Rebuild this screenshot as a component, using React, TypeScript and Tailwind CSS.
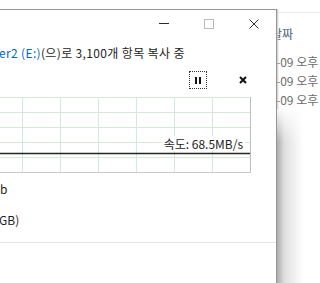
import { type ReactNode } from 'react'

const gridCols = [22, 60, 98, 136, 174, 212]
const gridRows = [0, 15, 30, 45, 60]

// Speed graph - the grid and the transfer line
function SpeedChart() {
  return (
    <svg width="251" height="76" className="block">
      {gridRows.map((y) => (
        <line key={y} x1="0" x2="250" y1={y + 0.5} y2={y + 0.5} stroke="#d6e8d8" />
      ))}
      {gridCols.map((x) => (
        <line key={x} x1={x + 0.5} x2={x + 0.5} y1="0" y2="75" stroke="#d6e8d8" />
      ))}
      <line x1="0" x2="250" y1="56.5" y2="56.5" stroke="#262626" strokeWidth="1.4" />
      <line x1="250.5" x2="250.5" y1="0" y2="76" stroke="#bdbdbd" />
      <line x1="0" x2="251" y1="75.5" y2="75.5" stroke="#c9c9c9" />
    </svg>
  )
}

function CaptionButton({ children }: { children: ReactNode }) {
  return <div className="w-[45px] h-full flex justify-center pt-[9px]">{children}</div>
}

function ExplorerRow({ text }: { text: string }) {
  return <div className="h-[19px] leading-[19px] whitespace-nowrap text-[#6d6d6d] -ml-[1px]">{text}</div>
}

export default function App() {
  return (
    <div className="w-[320px] h-[283px] bg-white overflow-hidden flex font-['Noto_Sans_CJK_KR','Noto_Sans',sans-serif] text-[12px]">
      {/* Copy dialog */}
      <div className="w-[277px] shrink-0 flex flex-col relative z-10">
        <div className="h-[9px] shrink-0" />
        <div className="flex-1 border-t border-r border-[#959595] bg-white flex flex-col">
          {/* Title bar */}
          <div className="h-[30px] shrink-0 flex justify-end">
            <CaptionButton>
              <div className="w-[10px] h-px bg-[#2b2b2b] mt-[4px]" />
            </CaptionButton>
            <CaptionButton>
              <div className="w-[10px] h-[10px] border border-[#b9b9b9]" />
            </CaptionButton>
            <CaptionButton>
              <svg width="10" height="10" viewBox="0 0 10 10">
                <path d="M0.5 0.5 L9.5 9.5 M9.5 0.5 L0.5 9.5" stroke="#2b2b2b" strokeWidth="1" fill="none" />
              </svg>
            </CaptionButton>
          </div>

          {/* Header line */}
          <div className="mt-[5px] h-[16px] leading-[16px] whitespace-nowrap text-[#1e1e1e] -ml-[1px] tracking-[0.35px]">
            <span className="text-[#0066cc]">er2 (E:)</span>(으)로 3,100개 항목 복사 중
          </div>

          {/* Pause / cancel */}
          <div className="mt-[10px] h-[18px] flex items-center">
            <div className="ml-[189px] w-[18px] h-[18px] border border-dotted border-[#333] flex items-center justify-center gap-[2px]">
              <div className="w-[2px] h-[7px] bg-[#111]" />
              <div className="w-[2px] h-[7px] bg-[#111]" />
            </div>
            <div className="ml-[32px] w-[8px] h-[8px] flex items-center justify-center">
              <svg width="8" height="8" viewBox="0 0 8 8">
                <path d="M1 1 L7 7 M7 1 L1 7" stroke="#111" strokeWidth="2" fill="none" />
              </svg>
            </div>
          </div>

          {/* Speed graph */}
          <div className="mt-[8px] relative w-[251px] h-[76px]">
            <SpeedChart />
            <div className="absolute right-[6px] top-[39px] h-[15px] leading-[15px] px-[2px] bg-white text-[#1e1e1e] whitespace-nowrap">
              속도: 68.5MB/s
            </div>
          </div>

          {/* Details */}
          <div className="mt-[8px] h-[16px] leading-[16px] text-[#1e1e1e]">b</div>
          <div className="mt-[15px] h-[16px] leading-[16px] text-[#1e1e1e] -ml-[1px]">GB)</div>

          <div className="mt-[14px] border-t border-[#e3e3e3] flex-1" />
        </div>
      </div>

      {/* Explorer window behind */}
      <div className="relative flex-1 flex flex-col overflow-hidden">
        <div className="h-[13px] shrink-0 border-b border-[#ececec]" />
        <div className="mt-[13px] h-[16px] leading-[16px] text-[#4c607a] whitespace-nowrap -ml-[6px]">날짜</div>
        <div className="mt-[10px] flex flex-col">
          <ExplorerRow text="-09 오후" />
          <ExplorerRow text="-09 오후" />
          <ExplorerRow text="-09 오후" />
        </div>
        {/* Window shadow */}
        <div className="absolute left-0 top-[106px] bottom-0 w-[26px] bg-linear-to-r from-[#adadad] via-[#e0e0e0] via-30% to-white/0">
          <div className="h-[36px] bg-linear-to-b from-white to-white/0" />
        </div>
        <div className="absolute left-0 top-[9px] h-[100px] w-[2px] bg-linear-to-r from-[#c8c8c8] to-white/0" />
      </div>
    </div>
  )
}
